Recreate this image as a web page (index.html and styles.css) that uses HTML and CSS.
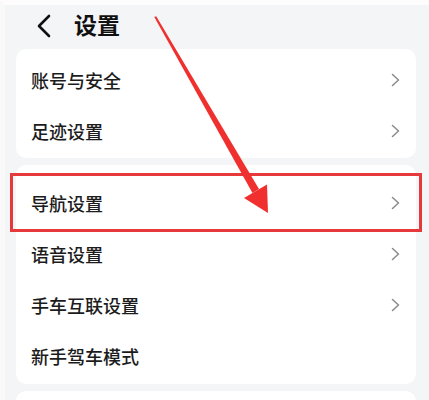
FILE: index.html
```html
<!DOCTYPE html>
<html lang="zh">
<head>
<meta charset="utf-8">
<link rel="stylesheet" href="styles.css">
</head>
<body>
<div class="page">
  <header class="topbar">
    <svg class="back" viewBox="0 0 16 24" width="16" height="24"><path d="M13 2 L3 12 L13 22" fill="none" stroke="#111" stroke-width="2.6" stroke-linecap="round" stroke-linejoin="round"/></svg>
    <h1 class="title">设置</h1>
  </header>
  <section class="card card-a">
    <div class="row"><span class="label">账号与安全</span><svg class="chev" viewBox="0 0 9 14" width="9" height="14"><path d="M1.5 1.5 L7.5 7 L1.5 12.5" fill="none" stroke="#8a8a8a" stroke-width="1.5" stroke-linecap="round" stroke-linejoin="round"/></svg></div>
    <div class="row"><span class="label">足迹设置</span><svg class="chev" viewBox="0 0 9 14" width="9" height="14"><path d="M1.5 1.5 L7.5 7 L1.5 12.5" fill="none" stroke="#8a8a8a" stroke-width="1.5" stroke-linecap="round" stroke-linejoin="round"/></svg></div>
  </section>
  <section class="card card-b">
    <div class="row row-hl"><span class="label">导航设置</span><svg class="chev" viewBox="0 0 9 14" width="9" height="14"><path d="M1.5 1.5 L7.5 7 L1.5 12.5" fill="none" stroke="#8a8a8a" stroke-width="1.5" stroke-linecap="round" stroke-linejoin="round"/></svg></div>
    <div class="row"><span class="label">语音设置</span><svg class="chev" viewBox="0 0 9 14" width="9" height="14"><path d="M1.5 1.5 L7.5 7 L1.5 12.5" fill="none" stroke="#8a8a8a" stroke-width="1.5" stroke-linecap="round" stroke-linejoin="round"/></svg></div>
    <div class="row"><span class="label">手车互联设置</span><svg class="chev" viewBox="0 0 9 14" width="9" height="14"><path d="M1.5 1.5 L7.5 7 L1.5 12.5" fill="none" stroke="#8a8a8a" stroke-width="1.5" stroke-linecap="round" stroke-linejoin="round"/></svg></div>
    <div class="row"><span class="label">新手驾车模式</span></div>
  </section>
  <section class="card card-c"></section>
  <svg class="arrow" viewBox="0 0 429 400" width="429" height="400">
    <polygon points="154.3,17 156.2,16.2 259,189 252.5,193" fill="#f0302e"/>
    <polygon points="268,213 244,198 267,184.5" fill="#f0302e"/>
  </svg>
</div>
</body>
</html>
```
FILE: styles.css
```css
html, body {
  margin: 0;
  padding: 0;
}
body {
  background: #f4f5f7;
  font-family: "Noto Sans CJK SC", "Noto Sans", sans-serif;
  color: #222;
}
.page {
  position: relative;
  width: 429px;
  height: 400px;
  overflow: hidden;
  box-sizing: border-box;
  border-top: 5px solid #fdfdfd;
  border-left: 5px solid #f9f9fa;
  padding: 0 13px 0 11px;
}
.topbar {
  height: 44px;
  display: flex;
  align-items: center;
  gap: 22px;
  padding-left: 20px;
}
.back {
  display: block;
  margin-top: -2px;
}
.title {
  margin: 0;
  font-size: 23px;
  font-weight: 700;
  color: #111;
  line-height: 1;
  margin-top: -6px;
}
.card {
  background: #fff;
  border-radius: 10px;
}
.card-a {
  padding: 5px 0 2px;
}
.card-b {
  margin-top: 7px;
  padding: 12px 0 3px;
}
.card-c {
  margin-top: 7px;
  height: 30px;
}
.row {
  position: relative;
  height: 51px;
  display: flex;
  align-items: center;
  justify-content: space-between;
  padding: 0 16px 0 15px;
}
.label {
  font-size: 18px;
  font-weight: 500;
  line-height: 1;
  color: #1c1c1c;
}
.chev {
  display: block;
  margin-right: 0;
}
.row-hl::after {
  content: "";
  position: absolute;
  left: -6px;
  right: -6px;
  top: -4px;
  bottom: -4px;
  border: 3px solid #e5393b;
}
.arrow {
  position: absolute;
  left: -5px;
  top: -5px;
  pointer-events: none;
}
```
